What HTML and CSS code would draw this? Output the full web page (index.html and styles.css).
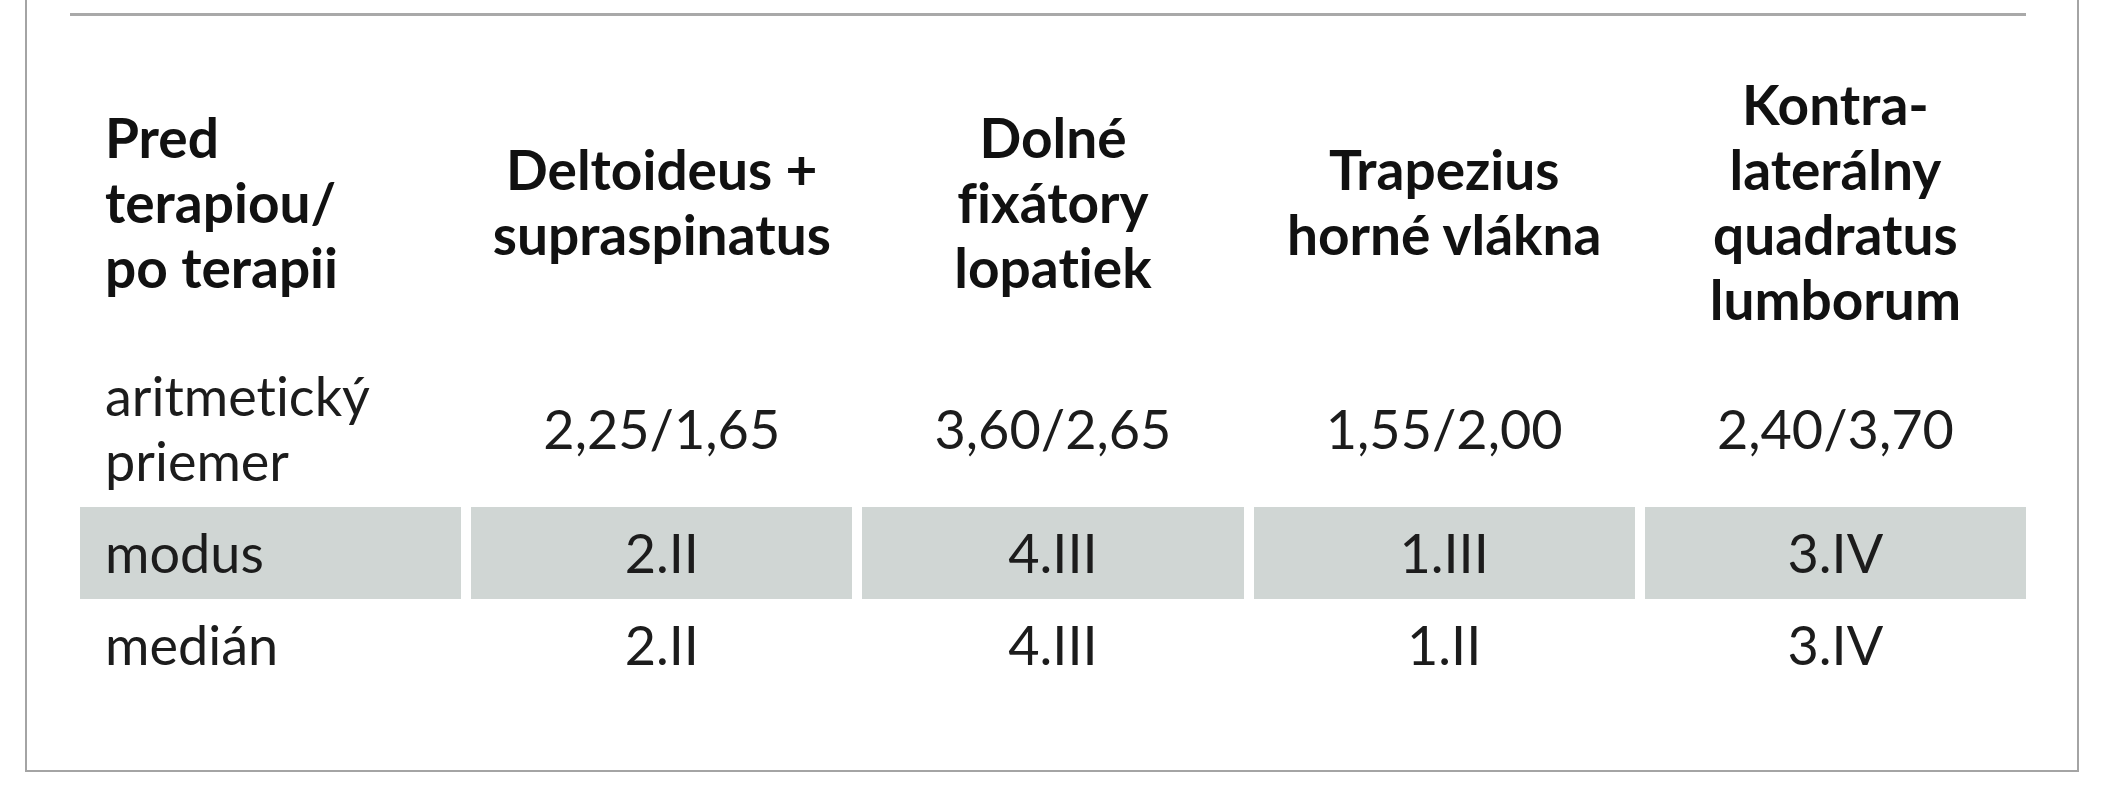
FILE: index.html
```html
<!DOCTYPE html>
<html lang="sk">
<head>
<meta charset="utf-8">
<title>Tabuľka</title>
<link rel="stylesheet" href="styles.css">
</head>
<body>
<div class="frame">
  <div class="rule"></div>
  <table class="tbl">
    <thead>
      <tr>
        <th class="first">Pred<br>terapiou/<br>po terapii</th>
        <th>Deltoideus +<br>supraspinatus</th>
        <th>Dolné<br>fixátory<br>lopatiek</th>
        <th>Trapezius<br>horné vlákna</th>
        <th>Kontra-<br>laterálny<br>quadratus<br>lumborum</th>
      </tr>
    </thead>
    <tbody>
      <tr>
        <td class="first">aritmetický<br>priemer</td>
        <td>2,25/1,65</td>
        <td>3,60/2,65</td>
        <td>1,55/2,00</td>
        <td>2,40/3,70</td>
      </tr>
      <tr class="shaded">
        <td class="first">modus</td>
        <td>2.II</td>
        <td>4.III</td>
        <td>1.III</td>
        <td>3.IV</td>
      </tr>
      <tr>
        <td class="first">medián</td>
        <td>2.II</td>
        <td>4.III</td>
        <td>1.II</td>
        <td>3.IV</td>
      </tr>
    </tbody>
  </table>
</div>
</body>
</html>
```

FILE: styles.css
```css
html, body {
  margin: 0;
  padding: 0;
  background: #ffffff;
}

body {
  font-family: Lato, "Open Sans", "Liberation Sans", sans-serif;
  font-variant-ligatures: none;
  color: #1c1c1c;
}

.frame {
  box-sizing: border-box;
  margin-left: 25px;
  width: 2054px;
  height: 772px;
  border: 2px solid #a4a4a4;
  border-top: none;
  padding-top: 13px;
}

.rule {
  margin-left: 43px;
  width: 1956px;
  height: 3px;
  background: #a9a9a9;
}

.tbl {
  margin-left: 43px;
  margin-top: 38px;
  width: 1966px;
  table-layout: fixed;
  border-collapse: separate;
  border-spacing: 10px 0;
}

.tbl th,
.tbl td {
  text-align: center;
  vertical-align: middle;
  line-height: 65px;
}

.tbl th {
  font-size: 55px;
  font-weight: 700;
  color: #111111;
  padding: 18px 0;
}

.tbl td {
  font-size: 54px;
  font-weight: 400;
  padding: 13px 0 14px;
}

.tbl .first {
  text-align: left;
  padding-left: 25px;
}

.shaded td {
  background: #d0d6d4;
}
```
